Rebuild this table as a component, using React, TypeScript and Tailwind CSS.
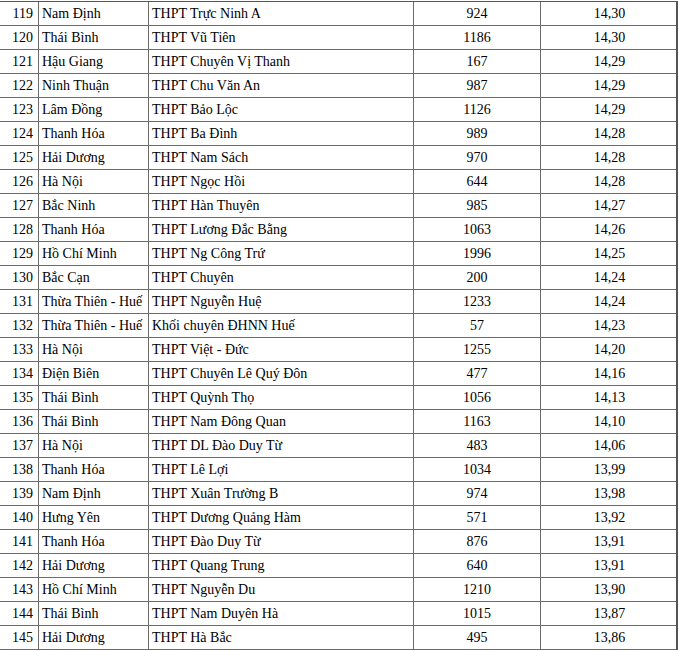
import React from 'react';

type Row = [number, string, string, number, string];

const rows: Row[] = [
  [119, 'Nam Định', 'THPT Trực Ninh A', 924, '14,30'],
  [120, 'Thái Bình', 'THPT Vũ Tiên', 1186, '14,30'],
  [121, 'Hậu Giang', 'THPT Chuyên Vị Thanh', 167, '14,29'],
  [122, 'Ninh Thuận', 'THPT Chu Văn An', 987, '14,29'],
  [123, 'Lâm Đồng', 'THPT Bảo Lộc', 1126, '14,29'],
  [124, 'Thanh Hóa', 'THPT Ba Đình', 989, '14,28'],
  [125, 'Hải Dương', 'THPT Nam Sách', 970, '14,28'],
  [126, 'Hà Nội', 'THPT Ngọc Hồi', 644, '14,28'],
  [127, 'Bắc Ninh', 'THPT Hàn Thuyên', 985, '14,27'],
  [128, 'Thanh Hóa', 'THPT Lương Đắc Bằng', 1063, '14,26'],
  [129, 'Hồ Chí Minh', 'THPT Ng Công Trứ', 1996, '14,25'],
  [130, 'Bắc Cạn', 'THPT Chuyên', 200, '14,24'],
  [131, 'Thừa Thiên - Huế', 'THPT Nguyễn Huệ', 1233, '14,24'],
  [132, 'Thừa Thiên - Huế', 'Khối chuyên ĐHNN Huế', 57, '14,23'],
  [133, 'Hà Nội', 'THPT Việt - Đức', 1255, '14,20'],
  [134, 'Điện Biên', 'THPT Chuyên Lê Quý Đôn', 477, '14,16'],
  [135, 'Thái Bình', 'THPT Quỳnh Thọ', 1056, '14,13'],
  [136, 'Thái Bình', 'THPT Nam Đông Quan', 1163, '14,10'],
  [137, 'Hà Nội', 'THPT DL Đào Duy Từ', 483, '14,06'],
  [138, 'Thanh Hóa', 'THPT Lê Lợi', 1034, '13,99'],
  [139, 'Nam Định', 'THPT Xuân Trường B', 974, '13,98'],
  [140, 'Hưng Yên', 'THPT Dương Quảng Hàm', 571, '13,92'],
  [141, 'Thanh Hóa', 'THPT Đào Duy Từ', 876, '13,91'],
  [142, 'Hải Dương', 'THPT Quang Trung', 640, '13,91'],
  [143, 'Hồ Chí Minh', 'THPT Nguyễn Du', 1210, '13,90'],
  [144, 'Thái Bình', 'THPT Nam Duyên Hà', 1015, '13,87'],
  [145, 'Hải Dương', 'THPT Hà Bắc', 495, '13,86'],
];

export default function App() {
  return (
    <div className="w-[680px] h-[651px] bg-white overflow-hidden pt-px text-[14px] text-black font-['Liberation_Serif']">
      <div className="w-[678px] border-t border-r-2 border-[#555]">
        {rows.map((r) => (
          <div
            key={r[0]}
            className="grid grid-cols-[39px_110px_265px_127px_137px] h-[24px] border-b border-[#6b6b6b] leading-none"
          >
            <div className="flex items-center justify-end pr-[5px] border-r border-[#6b6b6b]">{r[0]}</div>
            <div className="flex items-center pl-[3px] whitespace-nowrap border-r border-[#6b6b6b]">{r[1]}</div>
            <div className="flex items-center pl-[3px] whitespace-nowrap border-r border-[#6b6b6b]">{r[2]}</div>
            <div className="flex items-center justify-center border-r border-[#6b6b6b]">{r[3]}</div>
            <div className="flex items-center justify-center">{r[4]}</div>
          </div>
        ))}
      </div>
    </div>
  );
}
